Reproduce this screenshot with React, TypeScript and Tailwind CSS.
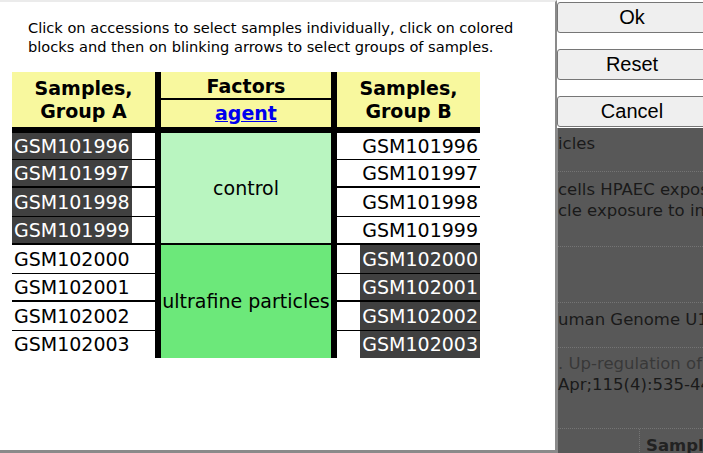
import React from "react";

const groupA = [
  { id: "GSM101996", dark: true },
  { id: "GSM101997", dark: true },
  { id: "GSM101998", dark: true },
  { id: "GSM101999", dark: true },
  { id: "GSM102000", dark: false },
  { id: "GSM102001", dark: false },
  { id: "GSM102002", dark: false },
  { id: "GSM102003", dark: false },
];

const groupB = groupA.map((s) => ({ id: s.id, dark: !s.dark }));

// row heights as measured, odd rows carry the heavier rule
const rowClass = [
  "h-[27px] border-b",
  "h-[28px] border-b-2",
  "h-[29px] border-b",
  "h-[28px] border-b-2",
  "h-[29px] border-b",
  "h-[28px] border-b-2",
  "h-[29px] border-b",
  "h-[27px]",
];

function SampleCell({ id, dark, right, i }: { id: string; dark: boolean; right?: boolean; i: number }) {
  return (
    <div
      className={`${rowClass[i]} border-black flex items-stretch ${right ? "justify-end" : "justify-start"}`}
    >
      <span
        className={`flex items-center px-[2px] ${dark ? "bg-[#404040] text-white" : "text-black"}`}
      >
        {id}
      </span>
    </div>
  );
}

export default function App() {
  return (
    <div className="w-[703px] h-[453px] flex overflow-hidden bg-white font-['DejaVu_Sans',sans-serif]">
      {/* Dialog panel */}
      <div className="w-[557px] h-full shrink-0 border-t-2 border-t-[#ebebeb] border-r-2 border-r-[#8a8a8a] border-b-[3px] border-b-[#8a8a8a] bg-white">
        <p className="ml-[28px] mt-[16px] text-[14.6px] leading-[19px] text-black whitespace-nowrap">
          Click on accessions to select samples individually, click on colored
          <br />
          blocks and then on blinking arrows to select groups of samples.
        </p>

        {/* Table */}
        <div className="ml-[12px] mt-[16px] w-[468px] text-[19px]">
          <div className="flex h-[55px] bg-[#f8f89e] font-bold leading-[23px] text-black">
            <div className="w-[143px] flex items-center justify-center text-center">
              Samples,
              <br />
              Group A
            </div>
            <div className="w-[6px] bg-black" />
            <div className="w-[170px] flex flex-col">
              <div className="h-[26px] pt-[2px] flex items-center justify-center">Factors</div>
              <div className="h-[2px] bg-black" />
              <div className="flex-1 flex items-center justify-center">
                <a className="text-[#0000ee] underline">agent</a>
              </div>
            </div>
            <div className="w-[6px] bg-black" />
            <div className="w-[143px] flex items-center justify-center text-center">
              Samples,
              <br />
              Group B
            </div>
          </div>
          <div className="h-[6px] bg-black" />
          <div className="flex">
            <div className="w-[143px] flex flex-col">
              {groupA.map((s, i) => (
                <SampleCell key={s.id} id={s.id} dark={s.dark} i={i} />
              ))}
            </div>
            <div className="w-[6px] bg-black" />
            <div className="w-[170px] flex flex-col text-black">
              <div className="h-[112px] flex items-center justify-center bg-[#b9f5c0] border-b-2 border-black">
                control
              </div>
              <div className="flex-1 flex items-center justify-center bg-[#6ce87a] whitespace-nowrap">
                ultrafine particles
              </div>
            </div>
            <div className="w-[6px] bg-black" />
            <div className="w-[143px] flex flex-col">
              {groupB.map((s, i) => (
                <SampleCell key={s.id} id={s.id} dark={s.dark} right i={i} />
              ))}
            </div>
          </div>
        </div>
      </div>

      {/* Right column: buttons + dimmed page */}
      <div className="flex-1 flex flex-col min-w-0">
        <div className="h-[128px] flex flex-col gap-[16px] pt-[2px] bg-white font-['Liberation_Sans',sans-serif]">
          {["Ok", "Reset", "Cancel"].map((b) => (
            <button
              key={b}
              className="w-[150px] h-[31px] shrink-0 pb-[2px] bg-[#efefef] border border-[#767676] rounded-[3px] text-[20px] leading-none text-black"
            >
              {b}
            </button>
          ))}
        </div>
        <div className="flex-1 bg-[#585858] border-l border-[#8a8a8a] text-[16.5px] leading-[21px] text-[#1a1a1a] whitespace-nowrap overflow-hidden">
          <div className="h-[44px] pt-[5px] border-b border-dotted border-[#747474]">icles</div>
          <div className="h-[75px] pt-[7px] border-b border-dotted border-[#747474]">
            cells HPAEC exposed
            <br />
            cle exposure to in
          </div>
          <div className="h-[56px] border-b border-dotted border-[#747474]" />
          <div className="h-[45px] pt-[6px] border-b border-dotted border-[#747474]">uman Genome U133</div>
          <div className="h-[81px] pt-[5px] border-b border-dotted border-[#747474]">
            <span className="text-[#383838]">. Up-regulation of</span>
            <br />
            Apr;115(4):535-44
          </div>
          <div className="flex h-full">
            <div className="w-[82px] shrink-0 border-r border-dotted border-[#747474]" />
            <div className="pl-[6px] pt-[6px] font-bold text-[#222]">Samples</div>
          </div>
        </div>
      </div>
    </div>
  );
}
